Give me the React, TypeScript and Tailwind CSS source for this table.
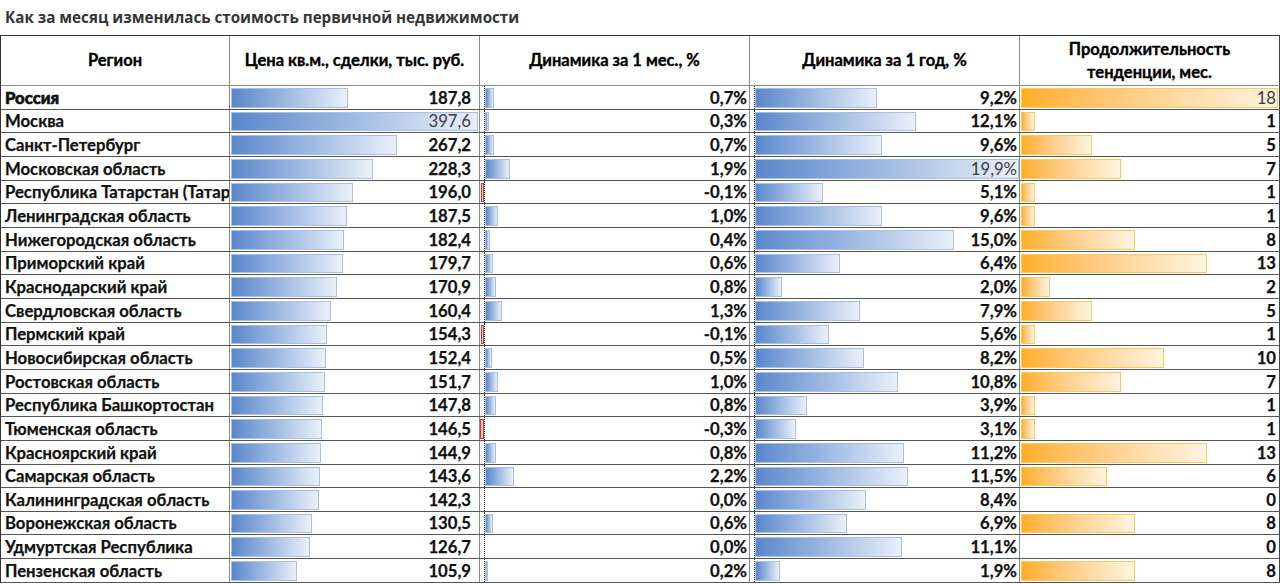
import React from 'react'

type Row = [string, number, number, number, number]

const rows: Row[] = [
  ['Россия', 187.8, 0.7, 9.2, 18],
  ['Москва', 397.6, 0.3, 12.1, 1],
  ['Санкт-Петербург', 267.2, 0.7, 9.6, 5],
  ['Московская область', 228.3, 1.9, 19.9, 7],
  ['Республика Татарстан (Татарстан)', 196.0, -0.1, 5.1, 1],
  ['Ленинградская область', 187.5, 1.0, 9.6, 1],
  ['Нижегородская область', 182.4, 0.4, 15.0, 8],
  ['Приморский край', 179.7, 0.6, 6.4, 13],
  ['Краснодарский край', 170.9, 0.8, 2.0, 2],
  ['Свердловская область', 160.4, 1.3, 7.9, 5],
  ['Пермский край', 154.3, -0.1, 5.6, 1],
  ['Новосибирская область', 152.4, 0.5, 8.2, 10],
  ['Ростовская область', 151.7, 1.0, 10.8, 7],
  ['Республика Башкортостан', 147.8, 0.8, 3.9, 1],
  ['Тюменская область', 146.5, -0.3, 3.1, 1],
  ['Красноярский край', 144.9, 0.8, 11.2, 13],
  ['Самарская область', 143.6, 2.2, 11.5, 6],
  ['Калининградская область', 142.3, 0.0, 8.4, 0],
  ['Воронежская область', 130.5, 0.6, 6.9, 8],
  ['Удмуртская Республика', 126.7, 0.0, 11.1, 0],
  ['Пензенская область', 105.9, 0.2, 1.9, 8],
]

const fmt = (v: number) => v.toFixed(1).replace('.', ',')

// px per percent point, shared by both dynamics columns
const PCT = 13.27

function BlueBar({ width, left = 1 }: { width: number; left?: number }) {
  if (width <= 0) return null
  return (
    <div
      className="absolute top-[2px] bottom-[1px] border border-[#a9bfe3] bg-gradient-to-r from-[#5a87cb] to-[#eaf0f9]"
      style={{ left, width }}
    />
  )
}

function Value({ text, max, pad = 'pr-[2px]' }: { text: string; max?: boolean; pad?: string }) {
  return (
    <span className={`relative ml-auto ${pad} ${max ? 'font-normal text-[#3c3c3c]' : 'font-bold text-[#111] [-webkit-text-stroke:0.25px_#111]'}`}>
      {text}
    </span>
  )
}

function Axis() {
  return <div className="absolute left-[4px] top-0 bottom-0 border-l border-dotted border-[#333]" />
}

function PctCell({ v, max }: { v: number; max?: boolean }) {
  const w = Math.abs(v) * PCT
  return (
    <div className="relative flex items-end pb-[1px] w-[270px] border-r border-[#8a8a8a]">
      <Axis />
      {v > 0 && <BlueBar left={5} width={w} />}
      {v < 0 && (
        <div
          className="absolute top-[2px] bottom-[1px] border border-[#e0322c] bg-[#f8c9c6]"
          style={{ left: 4 - Math.max(3, w), width: Math.max(3, w) }}
        />
      )}
      <Value text={fmt(v) + '%'} max={max} />
    </div>
  )
}

export default function App() {
  return (
    <div className="w-[1280px] h-[584px] bg-white overflow-hidden font-['Lato','Open_Sans',sans-serif]">
      <div className="h-[35px] pl-[5px] pt-[7px] text-[15.2px] font-bold text-[#353535] font-['Open_Sans',sans-serif] leading-[20px]">
        Как за месяц изменилась стоимость первичной недвижимости
      </div>
      <div className="border-t border-[#333] border-l">
        <div className="flex h-[50px] border-b border-[#8a8a8a] text-[16.5px] font-bold text-black leading-[23px] text-center [-webkit-text-stroke:0.35px_#000]">
          <div className="w-[229px] flex items-center justify-center border-r border-[#8a8a8a]">Регион</div>
          <div className="w-[250px] flex items-center justify-center border-r border-[#8a8a8a]">Цена кв.м., сделки, тыс. руб.</div>
          <div className="w-[270px] flex items-center justify-center border-r border-[#8a8a8a]">Динамика за 1 мес., %</div>
          <div className="w-[270px] flex items-center justify-center border-r border-[#8a8a8a]">Динамика за 1 год, %</div>
          <div className="w-[260px] flex items-center justify-center border-r border-[#444]">
            Продолжительность
            <br />
            тенденции, мес.
          </div>
        </div>
        {rows.map(([name, price, m, y, dur], i) => (
          <div key={name} className="flex h-[23.67px] border-b border-[#555] text-[16.7px] leading-[20px]">
            <div
              className={`w-[229px] flex items-end pb-[1px] pl-[4px] whitespace-nowrap overflow-hidden border-r border-[#8a8a8a] text-[#111] ${
                i === 0 ? 'font-black [-webkit-text-stroke:0.6px_#111]' : 'font-bold [-webkit-text-stroke:0.25px_#111]'
              }`}
            >
              {name}
            </div>
            <div className="relative flex items-end pb-[1px] w-[250px] border-r border-[#8a8a8a]">
              <BlueBar left={1} width={(price / 397.6) * 247} />
              <Value text={fmt(price)} max={price === 397.6} pad="pr-[8px]" />
            </div>
            <PctCell v={m} />
            <PctCell v={y} max={y === 19.9} />
            <div className="relative flex items-end pb-[1px] w-[260px] border-r border-[#444]">
              {dur > 0 && (
                <div
                  className="absolute left-[1px] top-[2px] bottom-[1px] border border-[#ffc95a] bg-gradient-to-r from-[#ffae1f] to-[#fff4e0]"
                  style={{ width: (dur / 18) * 257 }}
                />
              )}
              <Value text={String(dur)} max={dur === 18} pad="pr-[3px]" />
            </div>
          </div>
        ))}
      </div>
    </div>
  )
}
